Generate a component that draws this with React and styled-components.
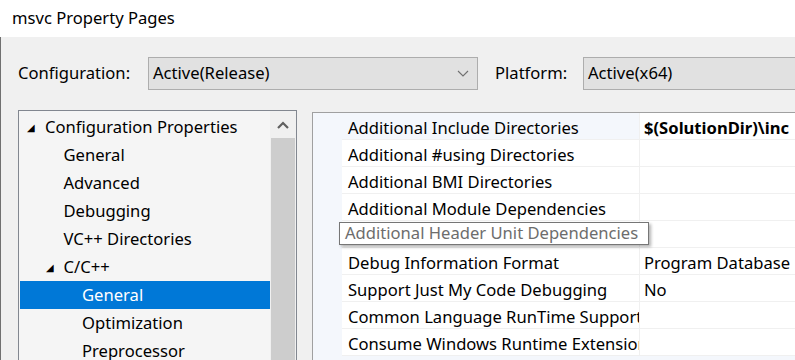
import React from 'react';
import styled, { createGlobalStyle } from 'styled-components';

const Global = createGlobalStyle`
  html, body {
    margin: 0;
    padding: 0;
    width: 795px;
    height: 360px;
    overflow: hidden;
    background: #f0f0f0;
  }
  body {
    font-family: "Segoe UI", "Noto Sans", "Open Sans", sans-serif;
    font-size: 16.6px;
    color: #000;
  }
`;

const Window = styled.div`
  display: flex;
  flex-direction: column;
  width: 795px;
  height: 360px;
  overflow: hidden;
`;
const TitleBar = styled.div`
  display: flex;
  align-items: center;
  height: 37px;
  flex-shrink: 0;
  padding-left: 12px;
  padding-bottom: 3px;
  box-sizing: border-box;
  background: #fff;
`;
const Body = styled.div`
  display: flex;
  flex-direction: column;
  flex: 1;
  border-left: 1px solid #707070;
  background: #f0f0f0;
  min-height: 0;
`;
const ConfigRow = styled.div`
  display: flex;
  flex-direction: row;
  align-items: center;
  height: 33px;
  margin-top: 20px;
  padding-left: 17px;
  flex-shrink: 0;
`;
const Label = styled.div`
  width: ${(p) => p.width}px;
  flex-shrink: 0;
  padding-bottom: 2px;
`;
const Combo = styled.div`
  display: flex;
  align-items: center;
  justify-content: space-between;
  box-sizing: border-box;
  height: 33px;
  width: ${(p) => (p.width ? `${p.width}px` : 'auto')};
  flex: ${(p) => (p.width ? '0 0 auto' : '1')};
  margin-right: ${(p) => (p.width ? '17px' : '-4px')};
  padding: 0 8px 2px 4px;
  background: #e1e1e1;
  border: 1px solid #adadad;
  white-space: nowrap;
  overflow: hidden;
`;
const Panels = styled.div`
  display: flex;
  flex-direction: row;
  flex: 1;
  margin-top: 20px;
  padding-left: 17px;
  gap: 15px;
  min-height: 0;
`;
const Tree = styled.div`
  display: flex;
  flex-direction: row;
  width: 279px;
  flex-shrink: 0;
  box-sizing: border-box;
  border: 1px solid #828790;
  border-bottom: none;
  background: #f5f5f5;
`;
const TreeList = styled.div`
  display: flex;
  flex-direction: column;
  flex: 1;
  padding: 2px 0 0 1px;
`;
const TreeItem = styled.div`
  display: flex;
  align-items: center;
  height: 28px;
  flex-shrink: 0;
  padding-left: ${(p) => 7 + p.level * 18.5}px;
  padding-bottom: 2px;
  box-sizing: border-box;
  background: ${(p) => (p.selected ? '#0078d7' : 'transparent')};
  color: ${(p) => (p.selected ? '#fff' : '#000')};
  white-space: nowrap;
`;
const Arrow = styled.span`
  display: inline-block;
  width: 18px;
  font-size: 10px;
  line-height: 1;
  padding-top: 2px;
`;
const Scrollbar = styled.div`
  display: flex;
  flex-direction: column;
  width: 26px;
  flex-shrink: 0;
  background: #f0f0f0;
`;
const ScrollButton = styled.div`
  display: flex;
  align-items: center;
  justify-content: center;
  height: 27px;
  flex-shrink: 0;
`;
const Thumb = styled.div`
  flex: 1;
  margin: 0 1px;
  background: #cdcdcd;
`;
const Grid = styled.div`
  position: relative;
  display: flex;
  flex-direction: column;
  flex: 1;
  margin-top: 2px;
  margin-right: -40px;
  border-top: 1px solid #a0a0a0;
  border-left: 1px solid #a0a0a0;
  background: #f4f7fc;
  overflow: hidden;
`;
const GridRow = styled.div`
  display: flex;
  flex-direction: row;
  height: 27px;
  flex-shrink: 0;
  padding-left: 29px;
`;
const NameCell = styled.div`
  display: flex;
  align-items: center;
  width: 298px;
  flex-shrink: 0;
  box-sizing: border-box;
  padding: 2px 0 0 6px;
  background: ${(p) => (p.active ? 'transparent' : '#fff')};
  border-bottom: 1px solid #f0f0f0;
  border-right: 1px solid #f0f0f0;
  white-space: nowrap;
  overflow: hidden;
`;
const ValueCell = styled.div`
  display: flex;
  align-items: center;
  flex: 1;
  box-sizing: border-box;
  padding: 2px 0 0 4px;
  background: #fff;
  border-bottom: 1px solid #f0f0f0;
  font-weight: ${(p) => (p.bold ? 700 : 400)};
  white-space: nowrap;
  overflow: hidden;
`;
const Tooltip = styled.div`
  position: absolute;
  left: 26px;
  top: 109px;
  width: 310px;
  height: 23px;
  box-sizing: border-box;
  display: flex;
  align-items: center;
  padding: 0 0 2px 5px;
  background: #fff;
  border: 1px solid #767676;
  box-shadow: 2px 2px 3px rgba(0, 0, 0, 0.3);
  color: #6d6d6d;
  white-space: nowrap;
`;

const Chevron = ({ up }) => (
  <svg width="12" height="8" viewBox="0 0 12 8">
    {up ? (
      <polyline points="1,7 6,2 11,7" fill="none" stroke="#606060" strokeWidth="2.2" />
    ) : (
      <polyline points="1,2 6,7 11,2" fill="none" stroke="#707070" strokeWidth="1.1" />
    )}
  </svg>
);

const treeData = [
  { label: 'Configuration Properties', level: 0, open: true },
  { label: 'General', level: 1 },
  { label: 'Advanced', level: 1 },
  { label: 'Debugging', level: 1 },
  { label: 'VC++ Directories', level: 1 },
  { label: 'C/C++', level: 1, open: true },
  { label: 'General', level: 2, selected: true },
  { label: 'Optimization', level: 2 },
  { label: 'Preprocessor', level: 2 },
];

const props = [
  { name: 'Additional Include Directories', value: '$(SolutionDir)\\inc', bold: true, active: true },
  { name: 'Additional #using Directories', value: '' },
  { name: 'Additional BMI Directories', value: '' },
  { name: 'Additional Module Dependencies', value: '' },
  { name: '', value: '' },
  { name: 'Debug Information Format', value: 'Program Database' },
  { name: 'Support Just My Code Debugging', value: 'No' },
  { name: 'Common Language RunTime Support', value: '' },
  { name: 'Consume Windows Runtime Extension', value: '' },
];

export default function App() {
  return (
    <Window>
      <Global />
      <TitleBar>msvc Property Pages</TitleBar>
      <Body>
        <ConfigRow>
          <Label width={130}>Configuration:</Label>
          <Combo width={330}>
            <span>Active(Release)</span>
            <Chevron />
          </Combo>
          <Label width={88}>Platform:</Label>
          <Combo>
            <span>Active(x64)</span>
          </Combo>
        </ConfigRow>
        <Panels>
          <Tree>
            <TreeList>
              {treeData.map((item, index) => (
                <TreeItem key={index} level={item.level} selected={item.selected}>
                  <Arrow>{item.open ? '◢' : ''}</Arrow>
                  {item.label}
                </TreeItem>
              ))}
            </TreeList>
            <Scrollbar>
              <ScrollButton>
                <Chevron up />
              </ScrollButton>
              <Thumb />
            </Scrollbar>
          </Tree>
          <Grid>
            {props.map((item, index) => (
              <GridRow key={index}>
                <NameCell active={item.active}>{item.name}</NameCell>
                <ValueCell bold={item.bold}>{item.value}</ValueCell>
              </GridRow>
            ))}
            <Tooltip>Additional Header Unit Dependencies</Tooltip>
          </Grid>
        </Panels>
      </Body>
    </Window>
  );
}
